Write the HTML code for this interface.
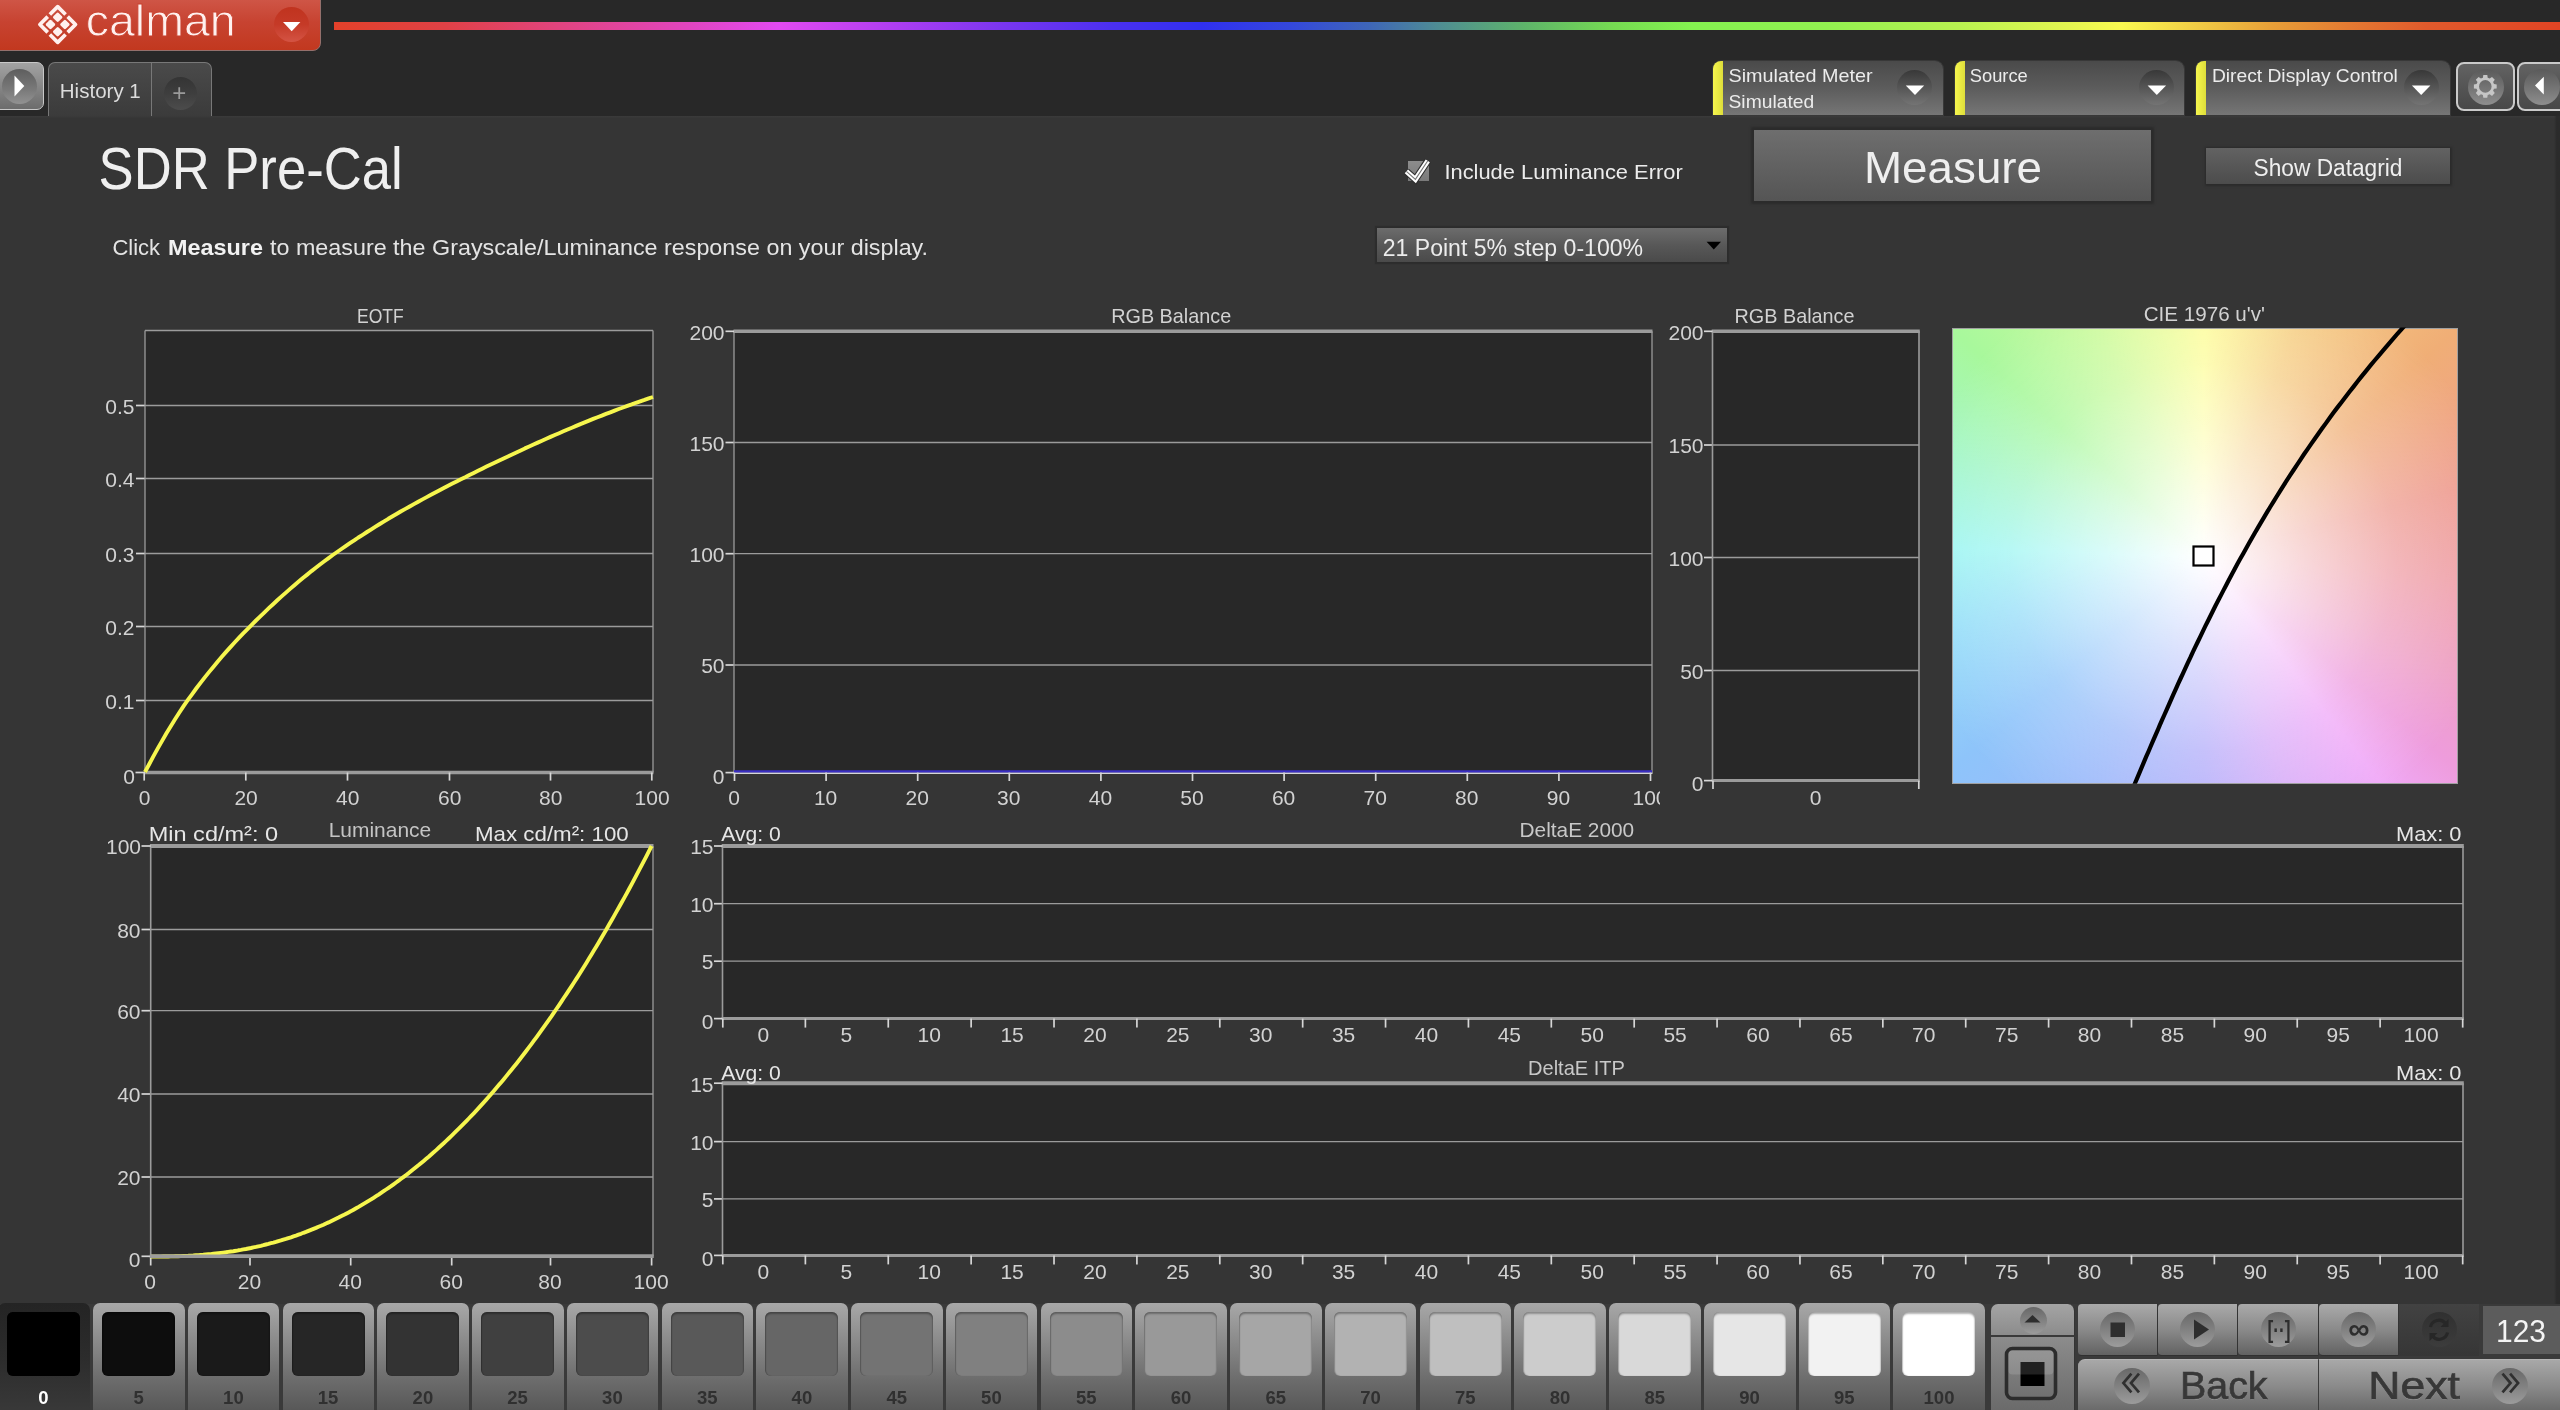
<!DOCTYPE html>
<html lang="en"><head><meta charset="utf-8"><title>Calman - SDR Pre-Cal</title>
<style>
*{box-sizing:border-box;margin:0;padding:0}
html,body{width:2560px;height:1410px;overflow:hidden;background:#353535;font-family:"Liberation Sans",sans-serif}
#root{position:relative;width:2560px;height:1410px;overflow:hidden;background:#353535}
#root>div,#root>svg{position:absolute}
.hdr{left:0;top:0;width:2560px;height:116px;background:#282828;border-bottom:0}
.hl{left:0;top:116px;width:2556px;height:2px;background:linear-gradient(#3b3b3b,#363636)}
.logo{left:-2px;top:-2px;width:322.7px;height:53px;border-radius:0 0 8px 0;background:linear-gradient(#cf5647,#c74331 45%,#c2381f);border:1px solid #94706c}
.rainbow{left:334px;top:21.5px;width:2226px;height:8.5px;background:linear-gradient(90deg,#e3412a 0%,#e04146 5%,#e0447e 10%,#e045c0 16%,#e24af2 20%,#b03ef2 25%,#7a36f0 30%,#4a30f0 35%,#3030f0 39%,#3448dc 43%,#3e66b8 46.5%,#4f8e92 49.7%,#5eb46a 53.5%,#76dc52 57.5%,#84f250 61%,#92f250 67%,#b8f250 73%,#e4f650 78%,#fafa50 80.3%,#f0c844 84%,#e8a038 87%,#e47a32 90.5%,#e05a2c 94%,#e04424 100%)}
.circ{border-radius:50%}
.play{left:-3px;top:61.7px;width:46.8px;height:48.8px;border-radius:0 7px 7px 0;border:1.5px solid #c8c8c8;background:linear-gradient(#a2a2a2,#6c6c6c)}
.tab{top:61.7px;height:54px;border:1px solid #787878;border-bottom:none;background:linear-gradient(#4a4a4a,#3b3b3b)}
.panel{top:61.3px;height:53.4px;border-radius:8px 8px 0 0;background:linear-gradient(#4a4a4a,#5c5c5c 50%,#767676);overflow:hidden;box-shadow:0 0 0 1px rgba(60,60,60,.8)}
.panel i{position:absolute;left:0;top:0;width:10.3px;height:100%;background:linear-gradient(90deg,#f6f64e,#dede3a)}
.dd{width:35px;height:35px;border-radius:50%;background:linear-gradient(#383838,#585858 55%,#747474)}
.sbtn{top:61.6px;height:49px;border:2px solid #cacaca;border-radius:8px;background:linear-gradient(#626262,#484848)}
.btn{background:linear-gradient(#6e6e6e,#555);box-shadow:0 0 2px 3px #2b2b2b}
.cie{border:1px solid #a0a0a0;background:radial-gradient(circle at 49.8% 50.2%,rgba(255,255,255,1) 0,rgba(255,255,255,.93) 6%,rgba(255,255,255,.6) 29%,rgba(255,255,255,.24) 57%,rgba(255,255,255,0) 88%),conic-gradient(from 0deg at 49.8% 50.2%,#fdfd9c 0deg,#f6cf86 22deg,#f0ae76 48deg,#ee9c90 75deg,#efa0a8 95deg,#eea0c4 115deg,#ee9cdc 130deg,#f0aaf8 142deg,#d8acf8 160deg,#b4aefa 180deg,#9cb8fa 205deg,#8ec4fa 230deg,#98e0f8 255deg,#a0f6f2 272deg,#a4f6c8 292deg,#a8f89c 312deg,#ccfa9c 335deg,#fdfd9c 360deg)}
.bar{left:0;top:1303.7px;width:2560px;height:107px;background:#3a3a3a}
.tile{top:1303.3px;width:91.6px;height:110px;border-radius:7px 7px 0 0;background:linear-gradient(#a8a8a8,#8a8a8a 35%,#6c6c6c 70%,#565656)}
.tile b{position:absolute;left:9px;top:8.5px;width:73px;height:64px;border-radius:6px;display:block;box-shadow:inset 0 2px 2px rgba(0,0,0,.3),inset 1px 0 1px rgba(0,0,0,.18),inset -1px 0 1px rgba(0,0,0,.1)}
.tile.sel{background:linear-gradient(#242424,#2c2c2c 50%,#393939)}
.cb{background:linear-gradient(#aaaaaa,#8a8a8a 50%,#626262);border-right:1.5px solid #343434;border-bottom:1.5px solid #303030;border-radius:4px 0 0 4px}
.cb .circ,.nb .circ{position:absolute;background:linear-gradient(#686868,#868686 60%,#9c9c9c)}
.nb{background:linear-gradient(#a8a8a8,#8a8a8a 50%,#666);border-top:1px solid #b4b4b4;border-radius:7px 0 0 0}
</style></head>
<body><div id="root">
<div class="hdr"></div>
<div class="hl"></div>
<div class="logo"></div>
<div class="circ" style="left:274px;top:7px;width:35px;height:35px;background:linear-gradient(#c0331f,#c53a27 50%,#d45444)"></div>
<div class="rainbow"></div>
<div class="play"><div class="circ" style="position:absolute;left:4px;top:6px;width:35px;height:35px;background:linear-gradient(#5e5e5e,#7a7a7a 60%,#929292)"></div></div>
<div class="tab" style="left:48px;width:104px;border-radius:7px 0 0 0"></div>
<div class="tab" style="left:151px;width:60.5px;border-radius:0 7px 0 0"><div class="circ" style="position:absolute;left:11.5px;top:14.5px;width:33px;height:33px;background:linear-gradient(#343434,#3e3e3e 50%,#4c4c4c)"></div></div>
<div class="panel" style="left:1712.6px;width:230.4px"><i></i><div class="dd" style="position:absolute;left:184.9px;top:9px"></div></div>
<div class="panel" style="left:1955px;width:229.3px"><i></i><div class="dd" style="position:absolute;left:184.3px;top:9px"></div></div>
<div class="panel" style="left:2195.6px;width:254.4px"><i></i><div class="dd" style="position:absolute;left:208.1px;top:9px"></div></div>
<div class="sbtn" style="left:2455.8px;width:59.6px"><div class="circ" style="position:absolute;left:10.5px;top:5.5px;width:36px;height:36px;background:linear-gradient(#5a5a5a,#787878 60%,#8e8e8e)"></div></div>
<div class="sbtn" style="left:2516.5px;width:60px"><div class="circ" style="position:absolute;left:5px;top:5.5px;width:36px;height:36px;background:linear-gradient(#5a5a5a,#787878 60%,#8e8e8e)"></div></div>
<div class="btn" style="left:1753.7px;top:130.3px;width:397.5px;height:70.9px"></div>
<div class="btn" style="left:2206px;top:148px;width:244px;height:36px;background:linear-gradient(#626262,#4c4c4c);box-shadow:0 0 2px 1.5px #2b2b2b"></div>
<div style="left:1375.6px;top:227.2px;width:352.4px;height:35.6px;background:linear-gradient(#6c6c6c,#585858 50%,#4a4a4a);border:1px solid #2c2c2c;box-shadow:0 0 1px 1px rgba(40,40,40,.6)"></div>
<div style="left:1407.7px;top:161.2px;width:21px;height:19.6px;background:linear-gradient(#8c8c8c,#7a7a7a)"></div>
<div style="left:2553.5px;top:116px;width:6.5px;height:1188px;background:linear-gradient(90deg,rgba(42,42,42,0),#2b2b2b 45%)"></div>
<div class="cie" style="left:1952px;top:327.5px;width:506px;height:456.29999999999995px"></div>
<div class="bar"></div>
<div class="tile sel" style="left:-2px;width:91.5px"><b style="background:#000;left:9px"></b></div>
<div class="tile" style="left:93.00px"><b style="background:rgb(13,13,13)"></b></div>
<div class="tile" style="left:187.76px"><b style="background:rgb(26,26,26)"></b></div>
<div class="tile" style="left:282.52px"><b style="background:rgb(38,38,38)"></b></div>
<div class="tile" style="left:377.28px"><b style="background:rgb(51,51,51)"></b></div>
<div class="tile" style="left:472.04px"><b style="background:rgb(64,64,64)"></b></div>
<div class="tile" style="left:566.80px"><b style="background:rgb(76,76,76)"></b></div>
<div class="tile" style="left:661.56px"><b style="background:rgb(89,89,89)"></b></div>
<div class="tile" style="left:756.32px"><b style="background:rgb(102,102,102)"></b></div>
<div class="tile" style="left:851.08px"><b style="background:rgb(115,115,115)"></b></div>
<div class="tile" style="left:945.84px"><b style="background:rgb(128,128,128)"></b></div>
<div class="tile" style="left:1040.60px"><b style="background:rgb(140,140,140)"></b></div>
<div class="tile" style="left:1135.36px"><b style="background:rgb(153,153,153)"></b></div>
<div class="tile" style="left:1230.12px"><b style="background:rgb(166,166,166)"></b></div>
<div class="tile" style="left:1324.88px"><b style="background:rgb(178,178,178)"></b></div>
<div class="tile" style="left:1419.64px"><b style="background:rgb(191,191,191)"></b></div>
<div class="tile" style="left:1514.40px"><b style="background:rgb(204,204,204)"></b></div>
<div class="tile" style="left:1609.16px"><b style="background:rgb(217,217,217)"></b></div>
<div class="tile" style="left:1703.92px"><b style="background:rgb(230,230,230)"></b></div>
<div class="tile" style="left:1798.68px"><b style="background:rgb(242,242,242)"></b></div>
<div class="tile" style="left:1893.44px"><b style="background:rgb(255,255,255)"></b></div>
<div class="cb" style="left:1990.5px;top:1303.7px;width:84.5px;height:32px;border-radius:7px 7px 0 0;border-bottom:1.5px solid #3a3a3a;background:linear-gradient(#a4a4a4,#8c8c8c)"><div class="circ" style="left:29px;top:3px;width:27px;height:27px"></div></div>
<div class="cb" style="left:1990.5px;top:1337px;width:84.5px;height:75px;border-radius:0;background:linear-gradient(#8c8c8c,#6a6a6a)"></div>
<div class="cb" style="left:2077.5px;top:1303.7px;width:80.4px;height:52.6px"><div class="circ" style="left:22.5px;top:8.5px;width:35px;height:35px"></div></div>
<div class="cb" style="left:2157.9px;top:1303.7px;width:80.4px;height:52.6px"><div class="circ" style="left:22.5px;top:8.5px;width:35px;height:35px"></div></div>
<div class="cb" style="left:2238.3px;top:1303.7px;width:80.4px;height:52.6px"><div class="circ" style="left:22.5px;top:8.5px;width:35px;height:35px"></div></div>
<div class="cb" style="left:2318.7px;top:1303.7px;width:80.4px;height:52.6px"><div class="circ" style="left:22.5px;top:8.5px;width:35px;height:35px"></div></div>
<div style="left:2399px;top:1303.7px;width:80px;height:52.6px;background:linear-gradient(#424242,#363636)"><div class="circ" style="position:absolute;left:22.5px;top:8.5px;width:35px;height:35px;background:linear-gradient(#303030,#3c3c3c)"></div></div>
<div style="left:2482.5px;top:1306.2px;width:80px;height:47.6px;background:#5c5c5c"></div>
<div class="nb" style="left:2077.5px;top:1358.7px;width:241.7px;height:54px;border-right:1.5px solid #3c3c3c"><div class="circ" style="left:36px;top:8px;width:36px;height:36px"></div></div>
<div class="nb" style="left:2319.2px;top:1358.7px;width:245px;height:54px;border-radius:0"><div class="circ" style="left:172.8px;top:8px;width:36px;height:36px"></div></div>
<svg width="2560" height="1410" viewBox="0 0 2560 1410" style="left:0;top:0;will-change:transform" font-family='"Liberation Sans", sans-serif'>
<rect x="145.00" y="330.50" width="508.00" height="442.00" fill="#282828"/>
<line x1="145.00" y1="405.50" x2="653.00" y2="405.50" stroke="#9b9b9b" stroke-width="1.3"/>
<line x1="136.00" y1="405.50" x2="145.00" y2="405.50" stroke="#d6d6d6" stroke-width="1.7"/>
<text x="134.50" y="413.52" font-size="21" text-anchor="end" fill="#d2d2d2" font-weight="normal">0.5</text>
<line x1="145.00" y1="478.50" x2="653.00" y2="478.50" stroke="#9b9b9b" stroke-width="1.3"/>
<line x1="136.00" y1="478.50" x2="145.00" y2="478.50" stroke="#d6d6d6" stroke-width="1.7"/>
<text x="134.50" y="486.52" font-size="21" text-anchor="end" fill="#d2d2d2" font-weight="normal">0.4</text>
<line x1="145.00" y1="553.50" x2="653.00" y2="553.50" stroke="#9b9b9b" stroke-width="1.3"/>
<line x1="136.00" y1="553.50" x2="145.00" y2="553.50" stroke="#d6d6d6" stroke-width="1.7"/>
<text x="134.50" y="561.52" font-size="21" text-anchor="end" fill="#d2d2d2" font-weight="normal">0.3</text>
<line x1="145.00" y1="626.50" x2="653.00" y2="626.50" stroke="#9b9b9b" stroke-width="1.3"/>
<line x1="136.00" y1="626.50" x2="145.00" y2="626.50" stroke="#d6d6d6" stroke-width="1.7"/>
<text x="134.50" y="634.52" font-size="21" text-anchor="end" fill="#d2d2d2" font-weight="normal">0.2</text>
<line x1="145.00" y1="700.50" x2="653.00" y2="700.50" stroke="#9b9b9b" stroke-width="1.3"/>
<line x1="136.00" y1="700.50" x2="145.00" y2="700.50" stroke="#d6d6d6" stroke-width="1.7"/>
<text x="134.50" y="708.52" font-size="21" text-anchor="end" fill="#d2d2d2" font-weight="normal">0.1</text>
<line x1="145.00" y1="330.50" x2="653.00" y2="330.50" stroke="#9b9b9b" stroke-width="1.3"/>
<line x1="145.00" y1="330.50" x2="145.00" y2="772.50" stroke="#9b9b9b" stroke-width="1.3"/>
<line x1="653.00" y1="330.50" x2="653.00" y2="772.50" stroke="#9b9b9b" stroke-width="1.3"/>
<line x1="144.50" y1="772.50" x2="653.50" y2="772.50" stroke="#9b9b9b" stroke-width="3.5"/>
<line x1="135.50" y1="772.50" x2="145.00" y2="772.50" stroke="#d6d6d6" stroke-width="1.7"/>
<text x="135.00" y="783.50" font-size="21" text-anchor="end" fill="#d2d2d2" font-weight="normal">0</text>
<line x1="144.20" y1="772.50" x2="144.20" y2="780.60" stroke="#d6d6d6" stroke-width="1.7"/>
<text x="144.50" y="804.50" font-size="21" text-anchor="middle" fill="#d2d2d2" font-weight="normal">0</text>
<line x1="245.80" y1="772.50" x2="245.80" y2="780.60" stroke="#d6d6d6" stroke-width="1.7"/>
<text x="246.10" y="804.50" font-size="21" text-anchor="middle" fill="#d2d2d2" font-weight="normal">20</text>
<line x1="347.50" y1="772.50" x2="347.50" y2="780.60" stroke="#d6d6d6" stroke-width="1.7"/>
<text x="347.80" y="804.50" font-size="21" text-anchor="middle" fill="#d2d2d2" font-weight="normal">40</text>
<line x1="449.50" y1="772.50" x2="449.50" y2="780.60" stroke="#d6d6d6" stroke-width="1.7"/>
<text x="449.80" y="804.50" font-size="21" text-anchor="middle" fill="#d2d2d2" font-weight="normal">60</text>
<line x1="550.50" y1="772.50" x2="550.50" y2="780.60" stroke="#d6d6d6" stroke-width="1.7"/>
<text x="550.80" y="804.50" font-size="21" text-anchor="middle" fill="#d2d2d2" font-weight="normal">80</text>
<line x1="651.80" y1="772.50" x2="651.80" y2="780.60" stroke="#d6d6d6" stroke-width="1.7"/>
<text x="652.10" y="804.50" font-size="21" text-anchor="middle" fill="#d2d2d2" font-weight="normal">100</text>
<text x="357.00" y="323.20" font-size="21" text-anchor="start" fill="#d2d2d2" font-weight="normal" textLength="46.8" lengthAdjust="spacingAndGlyphs">EOTF</text>
<polyline fill="none" stroke="#f6f64e" stroke-width="3.9" stroke-linejoin="round" points="145.0,772.0 149.3,764.0 153.5,756.2 157.8,748.4 162.1,740.9 166.3,733.5 170.6,726.4 174.9,719.5 179.2,712.8 183.4,706.4 187.7,700.2 192.0,694.3 196.2,688.5 200.5,682.9 204.8,677.4 209.0,672.1 213.3,666.9 217.6,661.7 221.8,656.8 226.1,651.9 230.4,647.1 234.6,642.5 238.9,637.9 243.2,633.4 247.5,629.1 251.7,624.8 256.0,620.5 260.3,616.4 264.5,612.3 268.8,608.2 273.1,604.2 277.3,600.3 281.6,596.4 285.9,592.6 290.1,588.9 294.4,585.2 298.7,581.6 302.9,578.0 307.2,574.6 311.5,571.1 315.8,567.8 320.0,564.5 324.3,561.3 328.6,558.1 332.8,555.0 337.1,552.0 341.4,549.0 345.6,546.1 349.9,543.2 354.2,540.4 358.4,537.5 362.7,534.8 367.0,532.0 371.3,529.3 375.5,526.7 379.8,524.0 384.1,521.4 388.3,518.8 392.6,516.3 396.9,513.8 401.1,511.3 405.4,508.9 409.7,506.5 413.9,504.1 418.2,501.7 422.5,499.4 426.7,497.1 431.0,494.8 435.3,492.5 439.6,490.2 443.8,488.0 448.1,485.8 452.4,483.6 456.6,481.5 460.9,479.3 465.2,477.2 469.4,475.0 473.7,472.9 478.0,470.8 482.2,468.7 486.5,466.6 490.8,464.6 495.1,462.5 499.3,460.5 503.6,458.4 507.9,456.4 512.1,454.4 516.4,452.4 520.7,450.4 524.9,448.4 529.2,446.5 533.5,444.5 537.7,442.6 542.0,440.7 546.3,438.8 550.5,436.9 554.8,435.0 559.1,433.2 563.4,431.3 567.6,429.5 571.9,427.7 576.2,425.9 580.4,424.1 584.7,422.4 589.0,420.6 593.2,418.9 597.5,417.2 601.8,415.6 606.0,413.9 610.3,412.3 614.6,410.6 618.8,409.0 623.1,407.5 627.4,405.9 631.7,404.4 635.9,402.8 640.2,401.3 644.5,399.9 648.7,398.4 653.0,397.0"/>
<rect x="150.70" y="846.00" width="502.30" height="410.30" fill="#282828"/>
<line x1="150.70" y1="929.50" x2="653.00" y2="929.50" stroke="#9b9b9b" stroke-width="1.3"/>
<line x1="141.50" y1="929.50" x2="150.70" y2="929.50" stroke="#d6d6d6" stroke-width="1.7"/>
<text x="140.50" y="937.52" font-size="21" text-anchor="end" fill="#d2d2d2" font-weight="normal">80</text>
<line x1="150.70" y1="1010.70" x2="653.00" y2="1010.70" stroke="#9b9b9b" stroke-width="1.3"/>
<line x1="141.50" y1="1010.70" x2="150.70" y2="1010.70" stroke="#d6d6d6" stroke-width="1.7"/>
<text x="140.50" y="1018.72" font-size="21" text-anchor="end" fill="#d2d2d2" font-weight="normal">60</text>
<line x1="150.70" y1="1094.00" x2="653.00" y2="1094.00" stroke="#9b9b9b" stroke-width="1.3"/>
<line x1="141.50" y1="1094.00" x2="150.70" y2="1094.00" stroke="#d6d6d6" stroke-width="1.7"/>
<text x="140.50" y="1102.02" font-size="21" text-anchor="end" fill="#d2d2d2" font-weight="normal">40</text>
<line x1="150.70" y1="1177.00" x2="653.00" y2="1177.00" stroke="#9b9b9b" stroke-width="1.3"/>
<line x1="141.50" y1="1177.00" x2="150.70" y2="1177.00" stroke="#d6d6d6" stroke-width="1.7"/>
<text x="140.50" y="1185.02" font-size="21" text-anchor="end" fill="#d2d2d2" font-weight="normal">20</text>
<line x1="150.70" y1="846.00" x2="150.70" y2="1256.30" stroke="#9b9b9b" stroke-width="1.6"/>
<line x1="653.00" y1="846.00" x2="653.00" y2="1256.30" stroke="#9b9b9b" stroke-width="1.3"/>
<line x1="149.90" y1="846.00" x2="653.50" y2="846.00" stroke="#9b9b9b" stroke-width="4"/>
<line x1="149.90" y1="1256.30" x2="653.50" y2="1256.30" stroke="#9b9b9b" stroke-width="3.5"/>
<line x1="141.50" y1="846.00" x2="150.70" y2="846.00" stroke="#d6d6d6" stroke-width="1.7"/>
<text x="141.00" y="853.82" font-size="21" text-anchor="end" fill="#d2d2d2" font-weight="normal">100</text>
<line x1="141.50" y1="1256.30" x2="150.70" y2="1256.30" stroke="#d6d6d6" stroke-width="1.7"/>
<text x="140.50" y="1267.32" font-size="21" text-anchor="end" fill="#d2d2d2" font-weight="normal">0</text>
<line x1="150.70" y1="1256.30" x2="150.70" y2="1265.50" stroke="#d6d6d6" stroke-width="1.7"/>
<text x="150.20" y="1289.00" font-size="21" text-anchor="middle" fill="#d2d2d2" font-weight="normal">0</text>
<line x1="250.00" y1="1256.30" x2="250.00" y2="1265.50" stroke="#d6d6d6" stroke-width="1.7"/>
<text x="249.50" y="1289.00" font-size="21" text-anchor="middle" fill="#d2d2d2" font-weight="normal">20</text>
<line x1="350.70" y1="1256.30" x2="350.70" y2="1265.50" stroke="#d6d6d6" stroke-width="1.7"/>
<text x="350.20" y="1289.00" font-size="21" text-anchor="middle" fill="#d2d2d2" font-weight="normal">40</text>
<line x1="451.70" y1="1256.30" x2="451.70" y2="1265.50" stroke="#d6d6d6" stroke-width="1.7"/>
<text x="451.20" y="1289.00" font-size="21" text-anchor="middle" fill="#d2d2d2" font-weight="normal">60</text>
<line x1="550.50" y1="1256.30" x2="550.50" y2="1265.50" stroke="#d6d6d6" stroke-width="1.7"/>
<text x="550.00" y="1289.00" font-size="21" text-anchor="middle" fill="#d2d2d2" font-weight="normal">80</text>
<line x1="651.60" y1="1256.30" x2="651.60" y2="1265.50" stroke="#d6d6d6" stroke-width="1.7"/>
<text x="651.10" y="1289.00" font-size="21" text-anchor="middle" fill="#d2d2d2" font-weight="normal">100</text>
<text x="328.70" y="837.00" font-size="21" text-anchor="start" fill="#c4c4c4" font-weight="normal" textLength="102.5" lengthAdjust="spacingAndGlyphs">Luminance</text>
<text x="148.70" y="841.20" font-size="21" text-anchor="start" fill="#e6e6e6" font-weight="normal" textLength="129.4" lengthAdjust="spacingAndGlyphs">Min cd/m²: 0</text>
<text x="475.00" y="841.20" font-size="21" text-anchor="start" fill="#e6e6e6" font-weight="normal" textLength="153.7" lengthAdjust="spacingAndGlyphs">Max cd/m²: 100</text>
<polyline fill="none" stroke="#f6f64e" stroke-width="3.9" stroke-linejoin="round" points="150.7,1256.6 153.2,1256.6 155.7,1256.6 158.2,1256.6 160.7,1256.6 163.2,1256.5 165.7,1256.5 168.2,1256.5 170.7,1256.4 173.2,1256.4 175.7,1256.3 178.2,1256.2 180.8,1256.1 183.3,1256.0 185.8,1255.9 188.3,1255.8 190.8,1255.6 193.3,1255.5 195.8,1255.3 198.3,1255.2 200.8,1255.0 203.3,1254.8 205.8,1254.5 208.3,1254.3 210.8,1254.1 213.3,1253.8 215.8,1253.5 218.3,1253.2 220.8,1252.9 223.3,1252.6 225.8,1252.3 228.3,1251.9 230.8,1251.5 233.3,1251.2 235.9,1250.8 238.4,1250.3 240.9,1249.9 243.4,1249.4 245.9,1249.0 248.4,1248.5 250.9,1248.0 253.4,1247.4 255.9,1246.9 258.4,1246.3 260.9,1245.8 263.4,1245.2 265.9,1244.5 268.4,1243.9 270.9,1243.2 273.4,1242.6 275.9,1241.9 278.4,1241.1 280.9,1240.4 283.4,1239.6 285.9,1238.9 288.4,1238.1 291.0,1237.3 293.5,1236.4 296.0,1235.6 298.5,1234.7 301.0,1233.8 303.5,1232.8 306.0,1231.9 308.5,1230.9 311.0,1229.9 313.5,1228.9 316.0,1227.9 318.5,1226.8 321.0,1225.8 323.5,1224.7 326.0,1223.5 328.5,1222.4 331.0,1221.2 333.5,1220.0 336.0,1218.8 338.5,1217.6 341.0,1216.3 343.5,1215.1 346.1,1213.7 348.6,1212.4 351.1,1211.1 353.6,1209.7 356.1,1208.3 358.6,1206.9 361.1,1205.4 363.6,1203.9 366.1,1202.4 368.6,1200.9 371.1,1199.4 373.6,1197.8 376.1,1196.2 378.6,1194.6 381.1,1192.9 383.6,1191.2 386.1,1189.5 388.6,1187.8 391.1,1186.1 393.6,1184.3 396.1,1182.5 398.6,1180.7 401.1,1178.8 403.7,1176.9 406.2,1175.0 408.7,1173.1 411.2,1171.1 413.7,1169.1 416.2,1167.1 418.7,1165.1 421.2,1163.0 423.7,1160.9 426.2,1158.8 428.7,1156.7 431.2,1154.5 433.7,1152.3 436.2,1150.1 438.7,1147.8 441.2,1145.5 443.7,1143.2 446.2,1140.9 448.7,1138.5 451.2,1136.1 453.7,1133.7 456.2,1131.2 458.8,1128.7 461.3,1126.2 463.8,1123.7 466.3,1121.1 468.8,1118.5 471.3,1115.9 473.8,1113.3 476.3,1110.6 478.8,1107.9 481.3,1105.1 483.8,1102.4 486.3,1099.6 488.8,1096.7 491.3,1093.9 493.8,1091.0 496.3,1088.1 498.8,1085.1 501.3,1082.2 503.8,1079.2 506.3,1076.1 508.8,1073.1 511.3,1070.0 513.9,1066.8 516.4,1063.7 518.9,1060.5 521.4,1057.3 523.9,1054.0 526.4,1050.7 528.9,1047.4 531.4,1044.1 533.9,1040.7 536.4,1037.3 538.9,1033.9 541.4,1030.4 543.9,1026.9 546.4,1023.4 548.9,1019.8 551.4,1016.3 553.9,1012.6 556.4,1009.0 558.9,1005.3 561.4,1001.6 563.9,997.8 566.4,994.1 569.0,990.2 571.5,986.4 574.0,982.5 576.5,978.6 579.0,974.7 581.5,970.7 584.0,966.7 586.5,962.7 589.0,958.6 591.5,954.5 594.0,950.3 596.5,946.2 599.0,942.0 601.5,937.7 604.0,933.5 606.5,929.2 609.0,924.8 611.5,920.5 614.0,916.1 616.5,911.6 619.0,907.2 621.5,902.7 624.1,898.1 626.6,893.6 629.1,889.0 631.6,884.3 634.1,879.6 636.6,874.9 639.1,870.2 641.6,865.4 644.1,860.6 646.6,855.8 649.1,850.9 651.6,846.0"/>
<line x1="149.90" y1="1256.30" x2="653.50" y2="1256.30" stroke="#9b9b9b" stroke-width="3.5"/>
<rect x="734.00" y="331.30" width="918.00" height="441.30" fill="#282828"/>
<line x1="734.00" y1="442.50" x2="1652.00" y2="442.50" stroke="#9b9b9b" stroke-width="1.3"/>
<line x1="725.50" y1="442.50" x2="734.00" y2="442.50" stroke="#d6d6d6" stroke-width="1.7"/>
<text x="724.50" y="450.52" font-size="21" text-anchor="end" fill="#d2d2d2" font-weight="normal">150</text>
<line x1="734.00" y1="553.70" x2="1652.00" y2="553.70" stroke="#9b9b9b" stroke-width="1.3"/>
<line x1="725.50" y1="553.70" x2="734.00" y2="553.70" stroke="#d6d6d6" stroke-width="1.7"/>
<text x="724.50" y="561.72" font-size="21" text-anchor="end" fill="#d2d2d2" font-weight="normal">100</text>
<line x1="734.00" y1="665.00" x2="1652.00" y2="665.00" stroke="#9b9b9b" stroke-width="1.3"/>
<line x1="725.50" y1="665.00" x2="734.00" y2="665.00" stroke="#d6d6d6" stroke-width="1.7"/>
<text x="724.50" y="673.02" font-size="21" text-anchor="end" fill="#d2d2d2" font-weight="normal">50</text>
<line x1="734.00" y1="331.30" x2="734.00" y2="772.60" stroke="#9b9b9b" stroke-width="1.3"/>
<line x1="1652.00" y1="331.30" x2="1652.00" y2="772.60" stroke="#9b9b9b" stroke-width="1.3"/>
<line x1="733.50" y1="331.30" x2="1652.50" y2="331.30" stroke="#9b9b9b" stroke-width="3.6"/>
<line x1="733.50" y1="773.20" x2="1652.50" y2="773.20" stroke="#d6d6d6" stroke-width="1.7"/>
<line x1="734.00" y1="771.40" x2="1652.00" y2="771.40" stroke="#3a2ec4" stroke-width="2.2"/>
<line x1="725.50" y1="331.30" x2="734.00" y2="331.30" stroke="#d6d6d6" stroke-width="1.7"/>
<text x="724.50" y="339.62" font-size="21" text-anchor="end" fill="#d2d2d2" font-weight="normal">200</text>
<line x1="725.50" y1="772.60" x2="734.00" y2="772.60" stroke="#d6d6d6" stroke-width="1.7"/>
<text x="724.50" y="783.62" font-size="21" text-anchor="end" fill="#d2d2d2" font-weight="normal">0</text>
<clipPath id="rgbclip"><rect x="700" y="780" width="960" height="40"/></clipPath>
<line x1="734.50" y1="772.60" x2="734.50" y2="781.00" stroke="#d6d6d6" stroke-width="1.7"/>
<text x="734.00" y="804.50" font-size="21" text-anchor="middle" fill="#d2d2d2" font-weight="normal" clip-path="url(#rgbclip)">0</text>
<line x1="826.10" y1="772.60" x2="826.10" y2="781.00" stroke="#d6d6d6" stroke-width="1.7"/>
<text x="825.60" y="804.50" font-size="21" text-anchor="middle" fill="#d2d2d2" font-weight="normal" clip-path="url(#rgbclip)">10</text>
<line x1="917.70" y1="772.60" x2="917.70" y2="781.00" stroke="#d6d6d6" stroke-width="1.7"/>
<text x="917.20" y="804.50" font-size="21" text-anchor="middle" fill="#d2d2d2" font-weight="normal" clip-path="url(#rgbclip)">20</text>
<line x1="1009.30" y1="772.60" x2="1009.30" y2="781.00" stroke="#d6d6d6" stroke-width="1.7"/>
<text x="1008.80" y="804.50" font-size="21" text-anchor="middle" fill="#d2d2d2" font-weight="normal" clip-path="url(#rgbclip)">30</text>
<line x1="1100.90" y1="772.60" x2="1100.90" y2="781.00" stroke="#d6d6d6" stroke-width="1.7"/>
<text x="1100.40" y="804.50" font-size="21" text-anchor="middle" fill="#d2d2d2" font-weight="normal" clip-path="url(#rgbclip)">40</text>
<line x1="1192.50" y1="772.60" x2="1192.50" y2="781.00" stroke="#d6d6d6" stroke-width="1.7"/>
<text x="1192.00" y="804.50" font-size="21" text-anchor="middle" fill="#d2d2d2" font-weight="normal" clip-path="url(#rgbclip)">50</text>
<line x1="1284.10" y1="772.60" x2="1284.10" y2="781.00" stroke="#d6d6d6" stroke-width="1.7"/>
<text x="1283.60" y="804.50" font-size="21" text-anchor="middle" fill="#d2d2d2" font-weight="normal" clip-path="url(#rgbclip)">60</text>
<line x1="1375.70" y1="772.60" x2="1375.70" y2="781.00" stroke="#d6d6d6" stroke-width="1.7"/>
<text x="1375.20" y="804.50" font-size="21" text-anchor="middle" fill="#d2d2d2" font-weight="normal" clip-path="url(#rgbclip)">70</text>
<line x1="1467.30" y1="772.60" x2="1467.30" y2="781.00" stroke="#d6d6d6" stroke-width="1.7"/>
<text x="1466.80" y="804.50" font-size="21" text-anchor="middle" fill="#d2d2d2" font-weight="normal" clip-path="url(#rgbclip)">80</text>
<line x1="1558.90" y1="772.60" x2="1558.90" y2="781.00" stroke="#d6d6d6" stroke-width="1.7"/>
<text x="1558.40" y="804.50" font-size="21" text-anchor="middle" fill="#d2d2d2" font-weight="normal" clip-path="url(#rgbclip)">90</text>
<line x1="1650.50" y1="772.60" x2="1650.50" y2="781.00" stroke="#d6d6d6" stroke-width="1.7"/>
<text x="1650.00" y="804.50" font-size="21" text-anchor="middle" fill="#d2d2d2" font-weight="normal" clip-path="url(#rgbclip)">100</text>
<text x="1111.20" y="323.20" font-size="21" text-anchor="start" fill="#d2d2d2" font-weight="normal" textLength="120" lengthAdjust="spacingAndGlyphs">RGB Balance</text>
<rect x="1712.50" y="331.30" width="206.50" height="449.30" fill="#282828"/>
<line x1="1712.50" y1="445.00" x2="1919.00" y2="445.00" stroke="#9b9b9b" stroke-width="1.3"/>
<line x1="1704.00" y1="445.00" x2="1712.50" y2="445.00" stroke="#d6d6d6" stroke-width="1.7"/>
<text x="1703.50" y="453.02" font-size="21" text-anchor="end" fill="#d2d2d2" font-weight="normal">150</text>
<line x1="1712.50" y1="557.50" x2="1919.00" y2="557.50" stroke="#9b9b9b" stroke-width="1.3"/>
<line x1="1704.00" y1="557.50" x2="1712.50" y2="557.50" stroke="#d6d6d6" stroke-width="1.7"/>
<text x="1703.50" y="565.52" font-size="21" text-anchor="end" fill="#d2d2d2" font-weight="normal">100</text>
<line x1="1712.50" y1="670.50" x2="1919.00" y2="670.50" stroke="#9b9b9b" stroke-width="1.3"/>
<line x1="1704.00" y1="670.50" x2="1712.50" y2="670.50" stroke="#d6d6d6" stroke-width="1.7"/>
<text x="1703.50" y="678.52" font-size="21" text-anchor="end" fill="#d2d2d2" font-weight="normal">50</text>
<line x1="1712.50" y1="331.30" x2="1712.50" y2="780.60" stroke="#9b9b9b" stroke-width="1.6"/>
<line x1="1919.00" y1="331.30" x2="1919.00" y2="780.60" stroke="#9b9b9b" stroke-width="1.6"/>
<line x1="1711.70" y1="331.30" x2="1919.80" y2="331.30" stroke="#9b9b9b" stroke-width="3.6"/>
<line x1="1711.70" y1="780.60" x2="1919.80" y2="780.60" stroke="#9b9b9b" stroke-width="3"/>
<line x1="1704.00" y1="331.30" x2="1712.50" y2="331.30" stroke="#d6d6d6" stroke-width="1.7"/>
<text x="1703.50" y="339.62" font-size="21" text-anchor="end" fill="#d2d2d2" font-weight="normal">200</text>
<line x1="1704.00" y1="780.60" x2="1712.50" y2="780.60" stroke="#d6d6d6" stroke-width="1.7"/>
<text x="1703.50" y="791.12" font-size="21" text-anchor="end" fill="#d2d2d2" font-weight="normal">0</text>
<line x1="1713.00" y1="780.60" x2="1713.00" y2="789.00" stroke="#d6d6d6" stroke-width="1.7"/>
<line x1="1918.80" y1="780.60" x2="1918.80" y2="789.00" stroke="#d6d6d6" stroke-width="1.7"/>
<text x="1815.50" y="804.50" font-size="21" text-anchor="middle" fill="#d2d2d2" font-weight="normal">0</text>
<text x="1734.50" y="323.20" font-size="21" text-anchor="start" fill="#d2d2d2" font-weight="normal" textLength="120" lengthAdjust="spacingAndGlyphs">RGB Balance</text>
<rect x="722.50" y="846.00" width="1740.50" height="172.60" fill="#282828"/>
<line x1="722.50" y1="903.70" x2="2463.00" y2="903.70" stroke="#9b9b9b" stroke-width="1.3"/>
<line x1="714.00" y1="903.70" x2="722.50" y2="903.70" stroke="#d6d6d6" stroke-width="1.7"/>
<text x="713.50" y="911.72" font-size="21" text-anchor="end" fill="#d2d2d2" font-weight="normal">10</text>
<line x1="722.50" y1="961.20" x2="2463.00" y2="961.20" stroke="#9b9b9b" stroke-width="1.3"/>
<line x1="714.00" y1="961.20" x2="722.50" y2="961.20" stroke="#d6d6d6" stroke-width="1.7"/>
<text x="713.50" y="969.22" font-size="21" text-anchor="end" fill="#d2d2d2" font-weight="normal">5</text>
<line x1="722.50" y1="846.00" x2="722.50" y2="1018.60" stroke="#9b9b9b" stroke-width="1.6"/>
<line x1="2463.00" y1="846.00" x2="2463.00" y2="1018.60" stroke="#9b9b9b" stroke-width="1.6"/>
<line x1="721.70" y1="846.00" x2="2463.80" y2="846.00" stroke="#9b9b9b" stroke-width="4"/>
<line x1="721.70" y1="1018.60" x2="2463.80" y2="1018.60" stroke="#9b9b9b" stroke-width="3"/>
<line x1="714.00" y1="846.00" x2="722.50" y2="846.00" stroke="#d6d6d6" stroke-width="1.7"/>
<text x="713.50" y="854.32" font-size="21" text-anchor="end" fill="#d2d2d2" font-weight="normal">15</text>
<line x1="714.00" y1="1018.60" x2="722.50" y2="1018.60" stroke="#d6d6d6" stroke-width="1.7"/>
<text x="713.50" y="1029.12" font-size="21" text-anchor="end" fill="#d2d2d2" font-weight="normal">0</text>
<line x1="722.80" y1="1018.60" x2="722.80" y2="1027.60" stroke="#d6d6d6" stroke-width="1.7"/>
<text x="763.44" y="1041.50" font-size="21" text-anchor="middle" fill="#d2d2d2" font-weight="normal">0</text>
<line x1="805.38" y1="1018.60" x2="805.38" y2="1027.60" stroke="#d6d6d6" stroke-width="1.7"/>
<text x="846.32" y="1041.50" font-size="21" text-anchor="middle" fill="#d2d2d2" font-weight="normal">5</text>
<line x1="888.26" y1="1018.60" x2="888.26" y2="1027.60" stroke="#d6d6d6" stroke-width="1.7"/>
<text x="929.20" y="1041.50" font-size="21" text-anchor="middle" fill="#d2d2d2" font-weight="normal">10</text>
<line x1="971.14" y1="1018.60" x2="971.14" y2="1027.60" stroke="#d6d6d6" stroke-width="1.7"/>
<text x="1012.08" y="1041.50" font-size="21" text-anchor="middle" fill="#d2d2d2" font-weight="normal">15</text>
<line x1="1054.02" y1="1018.60" x2="1054.02" y2="1027.60" stroke="#d6d6d6" stroke-width="1.7"/>
<text x="1094.96" y="1041.50" font-size="21" text-anchor="middle" fill="#d2d2d2" font-weight="normal">20</text>
<line x1="1136.90" y1="1018.60" x2="1136.90" y2="1027.60" stroke="#d6d6d6" stroke-width="1.7"/>
<text x="1177.85" y="1041.50" font-size="21" text-anchor="middle" fill="#d2d2d2" font-weight="normal">25</text>
<line x1="1219.79" y1="1018.60" x2="1219.79" y2="1027.60" stroke="#d6d6d6" stroke-width="1.7"/>
<text x="1260.73" y="1041.50" font-size="21" text-anchor="middle" fill="#d2d2d2" font-weight="normal">30</text>
<line x1="1302.67" y1="1018.60" x2="1302.67" y2="1027.60" stroke="#d6d6d6" stroke-width="1.7"/>
<text x="1343.61" y="1041.50" font-size="21" text-anchor="middle" fill="#d2d2d2" font-weight="normal">35</text>
<line x1="1385.55" y1="1018.60" x2="1385.55" y2="1027.60" stroke="#d6d6d6" stroke-width="1.7"/>
<text x="1426.49" y="1041.50" font-size="21" text-anchor="middle" fill="#d2d2d2" font-weight="normal">40</text>
<line x1="1468.43" y1="1018.60" x2="1468.43" y2="1027.60" stroke="#d6d6d6" stroke-width="1.7"/>
<text x="1509.37" y="1041.50" font-size="21" text-anchor="middle" fill="#d2d2d2" font-weight="normal">45</text>
<line x1="1551.31" y1="1018.60" x2="1551.31" y2="1027.60" stroke="#d6d6d6" stroke-width="1.7"/>
<text x="1592.25" y="1041.50" font-size="21" text-anchor="middle" fill="#d2d2d2" font-weight="normal">50</text>
<line x1="1634.19" y1="1018.60" x2="1634.19" y2="1027.60" stroke="#d6d6d6" stroke-width="1.7"/>
<text x="1675.13" y="1041.50" font-size="21" text-anchor="middle" fill="#d2d2d2" font-weight="normal">55</text>
<line x1="1717.07" y1="1018.60" x2="1717.07" y2="1027.60" stroke="#d6d6d6" stroke-width="1.7"/>
<text x="1758.01" y="1041.50" font-size="21" text-anchor="middle" fill="#d2d2d2" font-weight="normal">60</text>
<line x1="1799.95" y1="1018.60" x2="1799.95" y2="1027.60" stroke="#d6d6d6" stroke-width="1.7"/>
<text x="1840.89" y="1041.50" font-size="21" text-anchor="middle" fill="#d2d2d2" font-weight="normal">65</text>
<line x1="1882.83" y1="1018.60" x2="1882.83" y2="1027.60" stroke="#d6d6d6" stroke-width="1.7"/>
<text x="1923.77" y="1041.50" font-size="21" text-anchor="middle" fill="#d2d2d2" font-weight="normal">70</text>
<line x1="1965.71" y1="1018.60" x2="1965.71" y2="1027.60" stroke="#d6d6d6" stroke-width="1.7"/>
<text x="2006.65" y="1041.50" font-size="21" text-anchor="middle" fill="#d2d2d2" font-weight="normal">75</text>
<line x1="2048.60" y1="1018.60" x2="2048.60" y2="1027.60" stroke="#d6d6d6" stroke-width="1.7"/>
<text x="2089.54" y="1041.50" font-size="21" text-anchor="middle" fill="#d2d2d2" font-weight="normal">80</text>
<line x1="2131.48" y1="1018.60" x2="2131.48" y2="1027.60" stroke="#d6d6d6" stroke-width="1.7"/>
<text x="2172.42" y="1041.50" font-size="21" text-anchor="middle" fill="#d2d2d2" font-weight="normal">85</text>
<line x1="2214.36" y1="1018.60" x2="2214.36" y2="1027.60" stroke="#d6d6d6" stroke-width="1.7"/>
<text x="2255.30" y="1041.50" font-size="21" text-anchor="middle" fill="#d2d2d2" font-weight="normal">90</text>
<line x1="2297.24" y1="1018.60" x2="2297.24" y2="1027.60" stroke="#d6d6d6" stroke-width="1.7"/>
<text x="2338.18" y="1041.50" font-size="21" text-anchor="middle" fill="#d2d2d2" font-weight="normal">95</text>
<line x1="2380.12" y1="1018.60" x2="2380.12" y2="1027.60" stroke="#d6d6d6" stroke-width="1.7"/>
<text x="2421.06" y="1041.50" font-size="21" text-anchor="middle" fill="#d2d2d2" font-weight="normal">100</text>
<line x1="2462.70" y1="1018.60" x2="2462.70" y2="1027.60" stroke="#d6d6d6" stroke-width="1.7"/>
<text x="1519.50" y="837.00" font-size="21" text-anchor="start" fill="#c8c8c8" font-weight="normal" textLength="114.7" lengthAdjust="spacingAndGlyphs">DeltaE 2000</text>
<text x="721.20" y="841.20" font-size="21" text-anchor="start" fill="#e6e6e6" font-weight="normal" textLength="59.5" lengthAdjust="spacingAndGlyphs">Avg: 0</text>
<text x="2396.00" y="841.20" font-size="21" text-anchor="start" fill="#e6e6e6" font-weight="normal" textLength="65.5" lengthAdjust="spacingAndGlyphs">Max: 0</text>
<rect x="722.50" y="1083.20" width="1740.50" height="172.20" fill="#282828"/>
<line x1="722.50" y1="1141.60" x2="2463.00" y2="1141.60" stroke="#9b9b9b" stroke-width="1.3"/>
<line x1="714.00" y1="1141.60" x2="722.50" y2="1141.60" stroke="#d6d6d6" stroke-width="1.7"/>
<text x="713.50" y="1149.62" font-size="21" text-anchor="end" fill="#d2d2d2" font-weight="normal">10</text>
<line x1="722.50" y1="1198.90" x2="2463.00" y2="1198.90" stroke="#9b9b9b" stroke-width="1.3"/>
<line x1="714.00" y1="1198.90" x2="722.50" y2="1198.90" stroke="#d6d6d6" stroke-width="1.7"/>
<text x="713.50" y="1206.92" font-size="21" text-anchor="end" fill="#d2d2d2" font-weight="normal">5</text>
<line x1="722.50" y1="1083.20" x2="722.50" y2="1255.40" stroke="#9b9b9b" stroke-width="1.6"/>
<line x1="2463.00" y1="1083.20" x2="2463.00" y2="1255.40" stroke="#9b9b9b" stroke-width="1.6"/>
<line x1="721.70" y1="1083.20" x2="2463.80" y2="1083.20" stroke="#9b9b9b" stroke-width="4"/>
<line x1="721.70" y1="1255.40" x2="2463.80" y2="1255.40" stroke="#9b9b9b" stroke-width="3"/>
<line x1="714.00" y1="1083.20" x2="722.50" y2="1083.20" stroke="#d6d6d6" stroke-width="1.7"/>
<text x="713.50" y="1091.52" font-size="21" text-anchor="end" fill="#d2d2d2" font-weight="normal">15</text>
<line x1="714.00" y1="1255.40" x2="722.50" y2="1255.40" stroke="#d6d6d6" stroke-width="1.7"/>
<text x="713.50" y="1265.92" font-size="21" text-anchor="end" fill="#d2d2d2" font-weight="normal">0</text>
<line x1="722.80" y1="1255.40" x2="722.80" y2="1264.40" stroke="#d6d6d6" stroke-width="1.7"/>
<text x="763.44" y="1279.30" font-size="21" text-anchor="middle" fill="#d2d2d2" font-weight="normal">0</text>
<line x1="805.38" y1="1255.40" x2="805.38" y2="1264.40" stroke="#d6d6d6" stroke-width="1.7"/>
<text x="846.32" y="1279.30" font-size="21" text-anchor="middle" fill="#d2d2d2" font-weight="normal">5</text>
<line x1="888.26" y1="1255.40" x2="888.26" y2="1264.40" stroke="#d6d6d6" stroke-width="1.7"/>
<text x="929.20" y="1279.30" font-size="21" text-anchor="middle" fill="#d2d2d2" font-weight="normal">10</text>
<line x1="971.14" y1="1255.40" x2="971.14" y2="1264.40" stroke="#d6d6d6" stroke-width="1.7"/>
<text x="1012.08" y="1279.30" font-size="21" text-anchor="middle" fill="#d2d2d2" font-weight="normal">15</text>
<line x1="1054.02" y1="1255.40" x2="1054.02" y2="1264.40" stroke="#d6d6d6" stroke-width="1.7"/>
<text x="1094.96" y="1279.30" font-size="21" text-anchor="middle" fill="#d2d2d2" font-weight="normal">20</text>
<line x1="1136.90" y1="1255.40" x2="1136.90" y2="1264.40" stroke="#d6d6d6" stroke-width="1.7"/>
<text x="1177.85" y="1279.30" font-size="21" text-anchor="middle" fill="#d2d2d2" font-weight="normal">25</text>
<line x1="1219.79" y1="1255.40" x2="1219.79" y2="1264.40" stroke="#d6d6d6" stroke-width="1.7"/>
<text x="1260.73" y="1279.30" font-size="21" text-anchor="middle" fill="#d2d2d2" font-weight="normal">30</text>
<line x1="1302.67" y1="1255.40" x2="1302.67" y2="1264.40" stroke="#d6d6d6" stroke-width="1.7"/>
<text x="1343.61" y="1279.30" font-size="21" text-anchor="middle" fill="#d2d2d2" font-weight="normal">35</text>
<line x1="1385.55" y1="1255.40" x2="1385.55" y2="1264.40" stroke="#d6d6d6" stroke-width="1.7"/>
<text x="1426.49" y="1279.30" font-size="21" text-anchor="middle" fill="#d2d2d2" font-weight="normal">40</text>
<line x1="1468.43" y1="1255.40" x2="1468.43" y2="1264.40" stroke="#d6d6d6" stroke-width="1.7"/>
<text x="1509.37" y="1279.30" font-size="21" text-anchor="middle" fill="#d2d2d2" font-weight="normal">45</text>
<line x1="1551.31" y1="1255.40" x2="1551.31" y2="1264.40" stroke="#d6d6d6" stroke-width="1.7"/>
<text x="1592.25" y="1279.30" font-size="21" text-anchor="middle" fill="#d2d2d2" font-weight="normal">50</text>
<line x1="1634.19" y1="1255.40" x2="1634.19" y2="1264.40" stroke="#d6d6d6" stroke-width="1.7"/>
<text x="1675.13" y="1279.30" font-size="21" text-anchor="middle" fill="#d2d2d2" font-weight="normal">55</text>
<line x1="1717.07" y1="1255.40" x2="1717.07" y2="1264.40" stroke="#d6d6d6" stroke-width="1.7"/>
<text x="1758.01" y="1279.30" font-size="21" text-anchor="middle" fill="#d2d2d2" font-weight="normal">60</text>
<line x1="1799.95" y1="1255.40" x2="1799.95" y2="1264.40" stroke="#d6d6d6" stroke-width="1.7"/>
<text x="1840.89" y="1279.30" font-size="21" text-anchor="middle" fill="#d2d2d2" font-weight="normal">65</text>
<line x1="1882.83" y1="1255.40" x2="1882.83" y2="1264.40" stroke="#d6d6d6" stroke-width="1.7"/>
<text x="1923.77" y="1279.30" font-size="21" text-anchor="middle" fill="#d2d2d2" font-weight="normal">70</text>
<line x1="1965.71" y1="1255.40" x2="1965.71" y2="1264.40" stroke="#d6d6d6" stroke-width="1.7"/>
<text x="2006.65" y="1279.30" font-size="21" text-anchor="middle" fill="#d2d2d2" font-weight="normal">75</text>
<line x1="2048.60" y1="1255.40" x2="2048.60" y2="1264.40" stroke="#d6d6d6" stroke-width="1.7"/>
<text x="2089.54" y="1279.30" font-size="21" text-anchor="middle" fill="#d2d2d2" font-weight="normal">80</text>
<line x1="2131.48" y1="1255.40" x2="2131.48" y2="1264.40" stroke="#d6d6d6" stroke-width="1.7"/>
<text x="2172.42" y="1279.30" font-size="21" text-anchor="middle" fill="#d2d2d2" font-weight="normal">85</text>
<line x1="2214.36" y1="1255.40" x2="2214.36" y2="1264.40" stroke="#d6d6d6" stroke-width="1.7"/>
<text x="2255.30" y="1279.30" font-size="21" text-anchor="middle" fill="#d2d2d2" font-weight="normal">90</text>
<line x1="2297.24" y1="1255.40" x2="2297.24" y2="1264.40" stroke="#d6d6d6" stroke-width="1.7"/>
<text x="2338.18" y="1279.30" font-size="21" text-anchor="middle" fill="#d2d2d2" font-weight="normal">95</text>
<line x1="2380.12" y1="1255.40" x2="2380.12" y2="1264.40" stroke="#d6d6d6" stroke-width="1.7"/>
<text x="2421.06" y="1279.30" font-size="21" text-anchor="middle" fill="#d2d2d2" font-weight="normal">100</text>
<line x1="2462.70" y1="1255.40" x2="2462.70" y2="1264.40" stroke="#d6d6d6" stroke-width="1.7"/>
<text x="1528.00" y="1075.00" font-size="21" text-anchor="start" fill="#c8c8c8" font-weight="normal" textLength="97" lengthAdjust="spacingAndGlyphs">DeltaE ITP</text>
<text x="721.20" y="1079.60" font-size="21" text-anchor="start" fill="#e6e6e6" font-weight="normal" textLength="59.5" lengthAdjust="spacingAndGlyphs">Avg: 0</text>
<text x="2396.00" y="1079.60" font-size="21" text-anchor="start" fill="#e6e6e6" font-weight="normal" textLength="65.5" lengthAdjust="spacingAndGlyphs">Max: 0</text>
<text x="2143.70" y="320.50" font-size="21" text-anchor="start" fill="#d2d2d2" font-weight="normal" textLength="121.3" lengthAdjust="spacingAndGlyphs">CIE 1976 u'v'</text>
<clipPath id="cieclip"><rect x="1952" y="327.5" width="506" height="456.29999999999995"/></clipPath>
<polyline clip-path="url(#cieclip)" fill="none" stroke="#000" stroke-width="4.2" points="2406.2,324.0 2401.6,329.2 2396.9,334.4 2392.4,339.6 2387.9,344.9 2383.4,350.1 2379.0,355.3 2374.6,360.5 2370.3,365.7 2366.1,370.9 2361.8,376.1 2357.7,381.3 2353.6,386.6 2349.5,391.8 2345.5,397.0 2341.5,402.2 2337.5,407.4 2333.6,412.6 2329.8,417.8 2326.0,423.1 2322.2,428.3 2318.5,433.5 2314.8,438.7 2311.2,443.9 2307.6,449.1 2304.0,454.3 2300.5,459.6 2297.0,464.8 2293.6,470.0 2290.2,475.2 2286.8,480.4 2283.5,485.6 2280.2,490.8 2277.0,496.0 2273.7,501.3 2270.5,506.5 2267.4,511.7 2264.3,516.9 2261.2,522.1 2258.1,527.3 2255.1,532.5 2252.1,537.8 2249.1,543.0 2246.2,548.2 2243.3,553.4 2240.4,558.6 2237.5,563.8 2234.7,569.0 2231.9,574.2 2229.1,579.5 2226.4,584.7 2223.7,589.9 2221.0,595.1 2218.3,600.3 2215.6,605.5 2213.0,610.7 2210.4,616.0 2207.8,621.2 2205.2,626.4 2202.7,631.6 2200.2,636.8 2197.7,642.0 2195.2,647.2 2192.7,652.4 2190.3,657.7 2187.8,662.9 2185.4,668.1 2183.0,673.3 2180.6,678.5 2178.2,683.7 2175.9,688.9 2173.5,694.2 2171.2,699.4 2168.9,704.6 2166.6,709.8 2164.3,715.0 2162.0,720.2 2159.7,725.4 2157.5,730.7 2155.2,735.9 2152.9,741.1 2150.7,746.3 2148.5,751.5 2146.2,756.7 2144.0,761.9 2141.8,767.1 2139.6,772.4 2137.4,777.6 2135.2,782.8 2133.0,788.0"/>
<rect x="2193.5" y="546.5" width="20" height="19" fill="#fff" stroke="#000" stroke-width="2.2"/>
<text x="85.70" y="35.90" font-size="45" text-anchor="start" fill="#fff0ee" font-weight="normal" textLength="150" lengthAdjust="spacingAndGlyphs" stroke="#c8422f" stroke-width="0.9">calman</text>
<text x="59.80" y="97.60" font-size="20.5" text-anchor="start" fill="#dcdcdc" font-weight="normal" textLength="81" lengthAdjust="spacingAndGlyphs">History 1</text>
<text x="179.30" y="100.50" font-size="24" text-anchor="middle" fill="#9a9a9a" font-weight="normal">+</text>
<text x="1728.50" y="81.90" font-size="19" text-anchor="start" fill="#ececec" font-weight="normal" textLength="144" lengthAdjust="spacingAndGlyphs">Simulated Meter</text>
<text x="1728.50" y="107.60" font-size="19" text-anchor="start" fill="#ececec" font-weight="normal" textLength="85.7" lengthAdjust="spacingAndGlyphs">Simulated</text>
<text x="1969.80" y="81.90" font-size="19" text-anchor="start" fill="#ececec" font-weight="normal" textLength="58" lengthAdjust="spacingAndGlyphs">Source</text>
<text x="2211.90" y="82.40" font-size="19" text-anchor="start" fill="#ececec" font-weight="normal" textLength="186" lengthAdjust="spacingAndGlyphs">Direct Display Control</text>
<text x="98.60" y="188.60" font-size="58.5" text-anchor="start" fill="#efefef" font-weight="normal" textLength="304" lengthAdjust="spacingAndGlyphs">SDR Pre-Cal</text>
<text x="112.50" y="254.50" font-size="21.5" text-anchor="start" fill="#e4e4e4" font-weight="normal" textLength="47.6" lengthAdjust="spacingAndGlyphs">Click</text>
<text x="168.00" y="254.50" font-size="21.5" text-anchor="start" fill="#f2f2f2" font-weight="bold" textLength="95" lengthAdjust="spacingAndGlyphs">Measure</text>
<text x="270.00" y="254.50" font-size="21.5" text-anchor="start" fill="#e4e4e4" font-weight="normal" textLength="658" lengthAdjust="spacingAndGlyphs">to measure the Grayscale/Luminance response on your display.</text>
<text x="1444.40" y="179.20" font-size="21" text-anchor="start" fill="#ececec" font-weight="normal" textLength="238.3" lengthAdjust="spacingAndGlyphs">Include Luminance Error</text>
<text x="1864.00" y="183.00" font-size="45" text-anchor="start" fill="#efefef" font-weight="normal" textLength="178" lengthAdjust="spacingAndGlyphs">Measure</text>
<text x="2253.50" y="175.60" font-size="23" text-anchor="start" fill="#efefef" font-weight="normal" textLength="149" lengthAdjust="spacingAndGlyphs">Show Datagrid</text>
<text x="1382.70" y="256.30" font-size="23.5" text-anchor="start" fill="#ececec" font-weight="normal" textLength="260.4" lengthAdjust="spacingAndGlyphs">21 Point 5% step 0-100%</text>
<g transform="translate(57.7,24.5) rotate(45)"><path d="M12.6,1.5 L12.6,12.6 L1.5,12.6 M12.6,-1.5 L12.6,-12.6 L1.5,-12.6 M-12.6,1.5 L-12.6,12.6 L-1.5,12.6 M-12.6,-1.5 L-12.6,-12.6 L-1.5,-12.6" fill="none" stroke="#fff0ee" stroke-width="3.7" stroke-linejoin="round"/><rect x="-8.8" y="-8.8" width="7.4" height="7.4" rx="1.3" fill="#fff0ee"/><rect x="-8.8" y="1.4" width="7.4" height="7.4" rx="1.3" fill="#fff0ee"/><rect x="1.4" y="-8.8" width="7.4" height="7.4" rx="1.3" fill="#fff0ee"/><rect x="1.4" y="1.4" width="7.4" height="7.4" rx="1.3" fill="#fff0ee"/></g>
<path d="M283.0,22.0 L300.4,22.0 L291.7,31.2 Z" fill="#fff"/>
<path d="M1905.8,85.6 L1924.2,85.6 L1915.0,95.0 Z" fill="#fff"/>
<path d="M2147.6,85.6 L2166.1,85.6 L2156.8,95.0 Z" fill="#fff"/>
<path d="M2411.9,85.6 L2430.4,85.6 L2421.2,95.0 Z" fill="#fff"/>
<path d="M1706.6,241.7 L1721.0,241.7 L1713.8,249.5 Z" fill="#000"/>
<path d="M14.5,75.5 L24.3,86 L14.5,96.5 Z" fill="#fff"/>
<path d="M2543.8,76.7 L2535,85.6 L2543.8,94.5 Z" fill="#fff"/>
<path fill-rule="evenodd" fill="#c6c6c6" d="M2494.0,84.0 L2496.7,84.4 L2496.7,88.4 L2494.0,88.8 L2493.1,90.8 L2494.8,93.1 L2492.0,95.9 L2489.7,94.2 L2487.7,95.1 L2487.3,97.8 L2483.3,97.8 L2482.9,95.1 L2480.9,94.2 L2478.6,95.9 L2475.8,93.1 L2477.5,90.8 L2476.6,88.8 L2473.9,88.4 L2473.9,84.4 L2476.6,84.0 L2477.5,82.0 L2475.8,79.7 L2478.6,76.9 L2480.9,78.6 L2482.9,77.7 L2483.3,75.0 L2487.3,75.0 L2487.7,77.7 L2489.7,78.6 L2492.0,76.9 L2494.8,79.7 L2493.1,82.0 Z M2491.6,86.4 a6.3,6.3 0 1,0 -12.6,0 a6.3,6.3 0 1,0 12.6,0 Z"/>
<path d="M1406.4,171.4 L1415.4,179.4 L1427.8,160.8" fill="none" stroke="#2e2e2e" stroke-width="7.2"/>
<path d="M1406.4,171.4 L1415.4,179.4 L1427.8,160.8" fill="none" stroke="#fff" stroke-width="5"/>
<path d="M1406.4,171.4 L1415.4,179.4 L1427.8,160.8" fill="none" stroke="#777" stroke-width="1.1"/>
<text x="43.5" y="1403.5" font-size="18.5" font-weight="bold" text-anchor="middle" fill="#fff">0</text>
<text x="138.6" y="1403.5" font-size="18.5" font-weight="bold" text-anchor="middle" fill="#303030">5</text>
<text x="233.4" y="1403.5" font-size="18.5" font-weight="bold" text-anchor="middle" fill="#303030">10</text>
<text x="328.1" y="1403.5" font-size="18.5" font-weight="bold" text-anchor="middle" fill="#303030">15</text>
<text x="422.9" y="1403.5" font-size="18.5" font-weight="bold" text-anchor="middle" fill="#303030">20</text>
<text x="517.6" y="1403.5" font-size="18.5" font-weight="bold" text-anchor="middle" fill="#303030">25</text>
<text x="612.4" y="1403.5" font-size="18.5" font-weight="bold" text-anchor="middle" fill="#303030">30</text>
<text x="707.2" y="1403.5" font-size="18.5" font-weight="bold" text-anchor="middle" fill="#303030">35</text>
<text x="801.9" y="1403.5" font-size="18.5" font-weight="bold" text-anchor="middle" fill="#303030">40</text>
<text x="896.7" y="1403.5" font-size="18.5" font-weight="bold" text-anchor="middle" fill="#303030">45</text>
<text x="991.4" y="1403.5" font-size="18.5" font-weight="bold" text-anchor="middle" fill="#303030">50</text>
<text x="1086.2" y="1403.5" font-size="18.5" font-weight="bold" text-anchor="middle" fill="#303030">55</text>
<text x="1181.0" y="1403.5" font-size="18.5" font-weight="bold" text-anchor="middle" fill="#303030">60</text>
<text x="1275.7" y="1403.5" font-size="18.5" font-weight="bold" text-anchor="middle" fill="#303030">65</text>
<text x="1370.5" y="1403.5" font-size="18.5" font-weight="bold" text-anchor="middle" fill="#303030">70</text>
<text x="1465.2" y="1403.5" font-size="18.5" font-weight="bold" text-anchor="middle" fill="#303030">75</text>
<text x="1560.0" y="1403.5" font-size="18.5" font-weight="bold" text-anchor="middle" fill="#303030">80</text>
<text x="1654.8" y="1403.5" font-size="18.5" font-weight="bold" text-anchor="middle" fill="#303030">85</text>
<text x="1749.5" y="1403.5" font-size="18.5" font-weight="bold" text-anchor="middle" fill="#303030">90</text>
<text x="1844.3" y="1403.5" font-size="18.5" font-weight="bold" text-anchor="middle" fill="#303030">95</text>
<text x="1939.0" y="1403.5" font-size="18.5" font-weight="bold" text-anchor="middle" fill="#303030">100</text>
<path d="M2024.5,1322.5 L2040.5,1322.5 L2032.5,1315 Z" fill="#2e2e2e"/>
<rect x="2006.5" y="1348.5" width="49" height="50" rx="6" fill="none" stroke="#2c2c2c" stroke-width="3.6"/>
<rect x="2020.5" y="1362" width="24" height="24" fill="#000"/>
<rect x="2008.5" y="1350.5" width="45" height="24" rx="4" fill="rgba(255,255,255,.13)"/>
<rect x="2110.5" y="1322.5" width="14.5" height="14.5" fill="#2e2e2e"/>
<path d="M2194,1319.5 L2209,1329.5 L2194,1339.5 Z" fill="#2e2e2e"/>
<text x="2279" y="1338" font-size="24" font-weight="bold" text-anchor="middle" fill="#2e2e2e" textLength="23" lengthAdjust="spacingAndGlyphs">[··]</text>
<text x="2359" y="1338.5" font-size="30" font-weight="bold" text-anchor="middle" fill="#2e2e2e">∞</text>
<path d="M2430.5,1327 a8.5,8.5 0 0,1 15,-3.5 M2447.5,1332.5 a8.5,8.5 0 0,1 -15,3.5" fill="none" stroke="#272727" stroke-width="3.2"/><path d="M2448.5,1319 l0,8 l-8,0 Z M2429.5,1341 l0,-8 l8,0 Z" fill="#272727"/>
<text x="2521" y="1341.5" font-size="31" text-anchor="middle" fill="#f4f4f4" textLength="50" lengthAdjust="spacingAndGlyphs">123</text>
<text x="2180" y="1400" font-size="39" fill="rgba(255,255,255,.22)" textLength="87.5" lengthAdjust="spacingAndGlyphs">Back</text>
<text x="2180" y="1398.7" font-size="39" fill="#383838" stroke="#383838" stroke-width="0.7" textLength="87.5" lengthAdjust="spacingAndGlyphs">Back</text>
<text x="2368.3" y="1400" font-size="39" fill="rgba(255,255,255,.22)" textLength="91.5" lengthAdjust="spacingAndGlyphs">Next</text>
<text x="2368.3" y="1398.7" font-size="39" fill="#383838" stroke="#383838" stroke-width="0.7" textLength="91.5" lengthAdjust="spacingAndGlyphs">Next</text>
<path d="M2131.4,1373.6 L2123.4,1383 L2131.4,1392.4 M2139.0,1373.6 L2131.0,1383 L2139.0,1392.4" fill="none" stroke="#303030" stroke-width="2.7"/>
<path d="M2502.5,1373.6 L2510.5,1383 L2502.5,1392.4 M2510.1,1373.6 L2518.1,1383 L2510.1,1392.4" fill="none" stroke="#303030" stroke-width="2.7"/>
</svg>
</div></body></html>
